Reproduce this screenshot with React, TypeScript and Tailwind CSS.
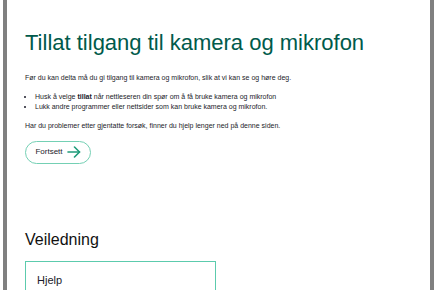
import React from 'react';

const ArrowRight = () => (
  <svg width="14" height="12" viewBox="0 0 14 12" fill="none" stroke="#1f9b7a" strokeWidth="1.6" strokeLinecap="round" strokeLinejoin="round">
    <path d="M1 6h11.5" />
    <path d="M7.5 1l5 5-5 5" />
  </svg>
);

export default function App() {
  return (
    <div className="w-[437px] h-[291px] overflow-hidden bg-white px-[3px] pb-[1px] font-['Liberation_Sans',Arial,sans-serif]">
      <div className="h-full border-x-4 border-[#808080] pl-[18px] overflow-hidden">
        {/* Brødsmule, delvis utenfor */}
        <div className="-mt-[7px] flex items-center gap-[18px] text-[7px] text-[#9cc3e6]">
          <span className="ml-[10px]">←</span>
          <span>Tilbake til forberedelsessiden</span>
        </div>

        <h1 className="mt-[25px] text-[22px] leading-[28px] text-[#005a4b]">
          Tillat tilgang til kamera og mikrofon
        </h1>

        <div className="mt-[16px] text-[7px] leading-[10px] text-[#1b1b2a]">
          <p>Før du kan delta må du gi tilgang til kamera og mikrofon, slik at vi kan se og høre deg.</p>
          <ul className="mt-[9px] list-disc pl-[10px]">
            <li>Husk å velge <b>tillat</b> når nettleseren din spør om å få bruke kamera og mikrofon</li>
            <li>Lukk andre programmer eller nettsider som kan bruke kamera og mikrofon.</li>
          </ul>
          <p className="mt-[9px]">Har du problemer etter gjentatte forsøk, finner du hjelp lenger ned på denne siden.</p>
        </div>

        <button className="mt-[10px] h-[23px] w-[66px] rounded-full border border-[#74d0b4] flex items-center justify-center gap-[4px] text-[8px] text-[#1b1b2a]">
          <span>Fortsett</span>
          <ArrowRight />
        </button>

        <h2 className="mt-[66px] text-[16px] leading-[20px] text-[#111]">Veiledning</h2>

        <div className="mt-[11px] w-[191px] h-[40px] border-[1.5px] border-solid border-[color:#5ccbad] pl-[11px] pt-[10px] text-[11px] text-[#1b1b2a]">
          Hjelp
        </div>
      </div>
    </div>
  );
}
